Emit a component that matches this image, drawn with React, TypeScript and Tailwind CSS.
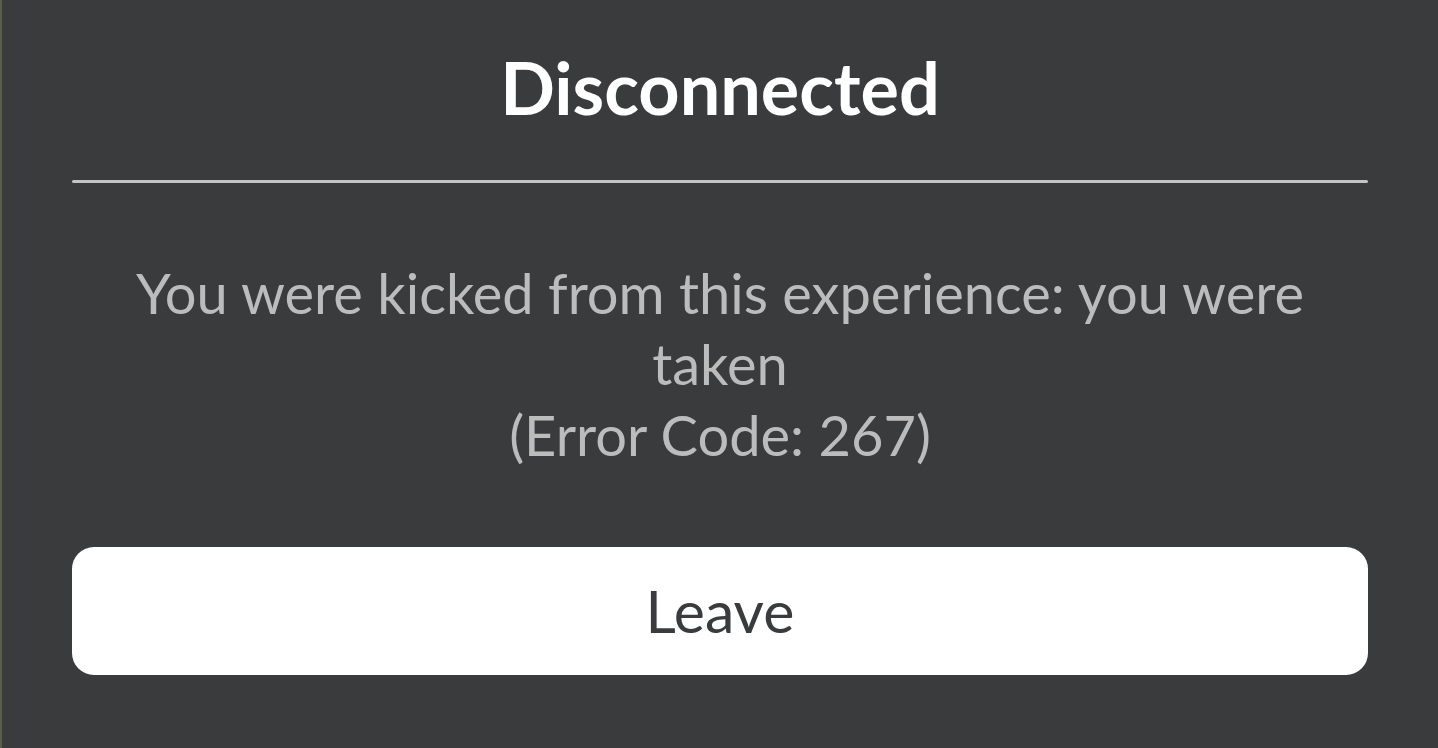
import React from 'react';

const lines = ['You were kicked from this experience: you were', 'taken', '(Error Code: 267)'];

export default function App() {
  return (
    <div
      className="w-[1438px] h-[748px] bg-[#393b3d] border-l-2 border-[#5c5c4a] flex flex-col px-[70px] overflow-hidden"
      style={{ fontFamily: 'Lato, "Open Sans", sans-serif' }}
    >
      <h1 className="pt-[37px] text-center text-white font-bold text-[72px] leading-[100px]">
        Disconnected
      </h1>
      <div className="mt-[43px] h-[3px] bg-[#c4c4c4] rounded-full" />
      <div className="mt-[74px] text-center text-[#bcbcbc] text-[56px] leading-[71px]">
        {lines.map((l) => (
          <div key={l}>{l}</div>
        ))}
      </div>
      <button className="mt-[77px] h-[128px] w-full rounded-[22px] bg-white flex items-center justify-center text-[59px] text-[#393b3d]">
        Leave
      </button>
    </div>
  );
}
